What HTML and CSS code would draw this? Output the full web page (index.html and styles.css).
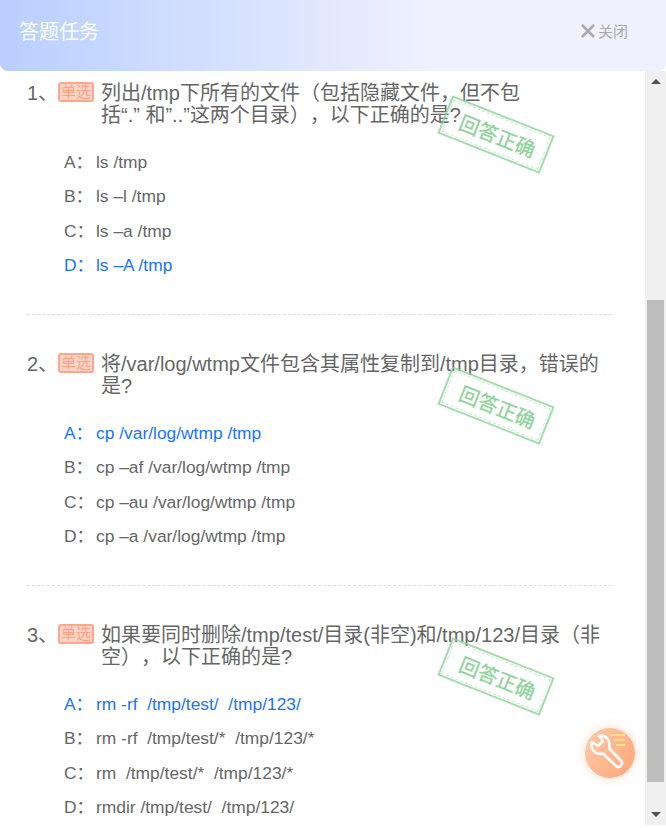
FILE: index.html
```html
<!DOCTYPE html>
<html lang="zh-CN">
<head>
    <meta charset="UTF-8">
    <title>答题任务</title>
    <link rel="stylesheet" href="styles.css">
</head>
<body>
    <div class="dialog">
        <div class="dialog-head">
            <span class="dialog-title">答题任务</span>
            <span class="dialog-close">
                <svg class="close-icon" viewBox="0 0 14 14"><path d="M1 1 L13 13 M13 1 L1 13"/></svg>
                关闭
            </span>
        </div>
        <div class="dialog-body">
            <div class="question-list">
                <div class="question">
                    <div class="question-title">
                        <span class="question-num">1、</span>
                        <span class="tag">单选</span>
                        <p class="question-text">列出/tmp下所有的文件（包括隐藏文件，但不包<span class="nowrap">括“.” 和”..”</span>这两个目录），以下正确的是?</p>
                    </div>
                    <div class="stamp"><span>回答正确</span></div>
                    <ul class="options">
                        <li><span class="opt-key">A：</span>ls /tmp</li>
                        <li><span class="opt-key">B：</span>ls –l /tmp</li>
                        <li><span class="opt-key">C：</span>ls –a /tmp</li>
                        <li class="right"><span class="opt-key">D：</span>ls –A /tmp</li>
                    </ul>
                </div>
                <div class="question">
                    <div class="question-title">
                        <span class="question-num">2、</span>
                        <span class="tag">单选</span>
                        <p class="question-text">将/var/log/wtmp文件包含其属性复制到/tmp目录，错误的是?</p>
                    </div>
                    <div class="stamp"><span>回答正确</span></div>
                    <ul class="options">
                        <li class="right"><span class="opt-key">A：</span>cp /var/log/wtmp /tmp</li>
                        <li><span class="opt-key">B：</span>cp –af /var/log/wtmp /tmp</li>
                        <li><span class="opt-key">C：</span>cp –au /var/log/wtmp /tmp</li>
                        <li><span class="opt-key">D：</span>cp –a /var/log/wtmp /tmp</li>
                    </ul>
                </div>
                <div class="question">
                    <div class="question-title">
                        <span class="question-num">3、</span>
                        <span class="tag">单选</span>
                        <p class="question-text">如果要同时删除/tmp/test/目录(非空)和/tmp/123/目录（非空），以下正确的是?</p>
                    </div>
                    <div class="stamp"><span>回答正确</span></div>
                    <ul class="options">
                        <li class="right"><span class="opt-key">A：</span>rm -rf&nbsp; /tmp/test/&nbsp; /tmp/123/</li>
                        <li><span class="opt-key">B：</span>rm -rf&nbsp; /tmp/test/*&nbsp; /tmp/123/*</li>
                        <li><span class="opt-key">C：</span>rm&nbsp; /tmp/test/*&nbsp; /tmp/123/*</li>
                        <li><span class="opt-key">D：</span>rmdir /tmp/test/&nbsp; /tmp/123/</li>
                    </ul>
                </div>
            </div>
            <div class="scrollbar">
                <div class="arrow arrow-up"></div>
                <div class="track"><div class="thumb"></div></div>
                <div class="arrow arrow-down"></div>
            </div>
            <div class="tool-btn">
                <svg viewBox="0 0 50 50" width="50" height="50">
                    <path class="tool-lines" d="M25 7 H40 M29 12 H40 M31 17 H40"/>
                    <path class="tool-wrench" d="M14 8 L18 13 L13 18 L7 14 C5 20 9 26 16 26 L18 25.5 L31 38 C34 41 39 36 36 33 L24 20 C26 13 21 6 14 8 Z"/>
                </svg>
            </div>
        </div>
    </div>
</body>
</html>
```

FILE: styles.css
```css
* {
    box-sizing: border-box;
}
html, body {
    margin: 0;
    padding: 0;
    background: #fff;
}
body {
    width: 666px;
    height: 828px;
    overflow: hidden;
    font-family: "Liberation Sans", "Noto Sans CJK SC", sans-serif;
    color: #666;
    text-spacing-trim: space-all;
}
.dialog {
    height: 825px;
    display: flex;
    flex-direction: column;
}
.dialog-head {
    height: 71px;
    flex: none;
    display: flex;
    justify-content: space-between;
    align-items: center;
    padding: 0 38px 10px 19px;
    background: linear-gradient(90deg, #b9cfff, #eff1ff 65%);
    border-radius: 0 0 8px 8px;
}
.dialog-title {
    font-size: 20px;
    color: #fff;
}
.dialog-close {
    display: flex;
    align-items: center;
    gap: 3px;
    font-size: 15px;
    color: #aaa;
}
.close-icon {
    width: 14px;
    height: 14px;
    fill: none;
    stroke: #aaa;
    stroke-width: 2.6;
}
.dialog-body {
    flex: 1;
    min-height: 0;
    display: flex;
    position: relative;
}
.question-list {
    flex: 1;
    overflow: hidden;
    padding: 11px 33px 0 27px;
}
.question {
    position: relative;
    height: 233px;
    border-bottom: 1px dashed #ddd;
    margin-bottom: 38px;
}
.question:last-child {
    border-bottom: 0;
}
.question-title {
    display: flex;
    align-items: flex-start;
    font-size: 20px;
    line-height: 22px;
    min-height: 44px;
}
.question-num {
    flex: none;
    width: 31px;
}
.tag {
    flex: none;
    width: 36px;
    height: 20px;
    margin-right: 7px;
    background: #ffd5c7;
    border: 2px solid #ffa78b;
    border-radius: 3px;
    color: #ffa084;
    font-size: 15px;
    line-height: 16px;
    text-align: center;
}
.question-text {
    margin: 0;
    flex: 1;
    padding-right: 10px;
}
.nowrap {
    white-space: nowrap;
}
.stamp {
    position: absolute;
    left: 414px;
    top: 32px;
    width: 110px;
    height: 41px;
    border: 2px solid rgba(134, 207, 147, 0.75);
    transform: rotate(21.6deg);
    display: flex;
    align-items: center;
    justify-content: center;
}
.stamp::after {
    content: '';
    position: absolute;
    top: 1px;
    left: 1px;
    right: 1px;
    bottom: 1px;
    border: 1px dashed rgba(134, 207, 147, 0.45);
}
.stamp span {
    padding-left: 4px;
    font-size: 20px;
    color: #8fd39b;
    -webkit-text-stroke: 0.3px #8fd39b;
    white-space: nowrap;
}
.options {
    list-style: none;
    margin: 19px 0 0;
    padding: 0 0 0 37px;
    font-size: 17.4px;
}
.options li {
    height: 34.4px;
    line-height: 34.4px;
    white-space: nowrap;
}
.options .right {
    color: #1a73ff;
}
.opt-key {
    display: inline-block;
    width: 32px;
}
.scrollbar {
    flex: none;
    width: 21px;
    background: #f0f0f0;
    display: flex;
    flex-direction: column;
    align-items: center;
}
.arrow {
    flex: none;
    width: 0;
    height: 0;
    margin: 8px 0;
    border-left: 5px solid transparent;
    border-right: 5px solid transparent;
}
.arrow-up {
    border-bottom: 5px solid #505050;
}
.arrow-down {
    border-top: 5px solid #505050;
}
.track {
    flex: 1;
    width: 100%;
    padding: 208px 2px 22px;
    display: flex;
}
.thumb {
    flex: 1;
    background: #bdbdbd;
}
.tool-btn {
    position: absolute;
    left: 585px;
    top: 657px;
    width: 50px;
    height: 50px;
    border-radius: 50%;
    background: linear-gradient(120deg, #fdcaa8, #ffa678);
    box-shadow: 0 0 12px rgba(255, 170, 120, 0.4);
}
.tool-wrench {
    fill: none;
    stroke: #fff;
    stroke-width: 2.6;
    stroke-linejoin: round;
}
.tool-lines {
    fill: none;
    stroke: #ffe08a;
    stroke-width: 2;
}
```
